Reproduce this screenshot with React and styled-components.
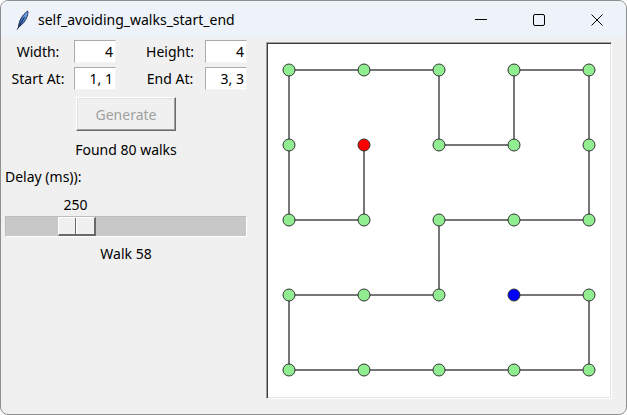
import React from "react";
import styled, { createGlobalStyle } from "styled-components";

const GlobalStyle = createGlobalStyle`
  html, body {
    margin: 0;
    padding: 0;
    background: #ffffff;
  }
  body {
    font-family: "Noto Sans", "Open Sans", sans-serif;
    font-size: 14px;
    color: #000;
  }
`;

const GRID = 5;
const STEP = 75;
const OFF_X = 21;
const OFF_Y = 26;

// walk 58: start (1,1) -> end (3,3)
const walk = [
  [1, 1], [1, 2], [0, 2], [0, 1], [0, 0], [1, 0], [2, 0], [2, 1], [3, 1],
  [3, 0], [4, 0], [4, 1], [4, 2], [3, 2], [2, 2], [2, 3], [1, 3], [0, 3],
  [0, 4], [1, 4], [2, 4], [3, 4], [4, 4], [4, 3], [3, 3],
];

const Window = styled.div`
  width: 627px;
  height: 415px;
  box-sizing: border-box;
  border: 1px solid #8e8e8e;
  border-radius: 8px;
  overflow: hidden;
  background: #f0f0f0;
  display: flex;
  flex-direction: column;
`;

const TitleBar = styled.div`
  height: 37px;
  flex: none;
  display: flex;
  align-items: center;
  background: #eef3f9;
`;

const TitleText = styled.span`
  margin-left: 9px;
  font-size: 14px;
  flex: 1;
  white-space: nowrap;
`;

const CaptionButton = styled.div`
  width: 58px;
  height: 37px;
  display: flex;
  align-items: center;
  justify-content: center;
`;

const Body = styled.div`
  flex: 1;
  display: flex;
  align-items: flex-start;
`;

const Panel = styled.div`
  width: 242px;
  margin-left: 4px;
  display: flex;
  flex-direction: column;
  align-items: center;
`;

const FieldGrid = styled.div`
  align-self: stretch;
  margin-top: 2px;
  display: grid;
  grid-template-columns: 69px 61px 70px 42px;
  row-gap: 4px;
  align-items: center;
`;

const Label = styled.span`
  text-align: center;
  padding-right: ${({ $pad }) => $pad || 0}px;
  white-space: nowrap;
`;

const Entry = styled.div`
  width: 42px;
  height: 23px;
  box-sizing: border-box;
  background: #fff;
  border-top: 1px solid #ababab;
  border-left: 1px solid #ababab;
  border-right: 1px solid #f4f4f4;
  border-bottom: 1px solid #f4f4f4;
  text-align: right;
  padding-right: 2px;
  line-height: 21px;
`;

const Button = styled.div`
  margin-top: 7px;
  width: 100px;
  height: 34px;
  box-sizing: border-box;
  background: #f0f0f0;
  border-top: 1px solid #fff;
  border-left: 1px solid #fff;
  border-right: 1px solid #696969;
  border-bottom: 1px solid #696969;
  box-shadow: inset -1px -1px 0 #a0a0a0, inset 1px 1px 0 #e3e3e3;
  color: ${({ disabled }) => (disabled ? "#a0a0a0" : "#000")};
  display: flex;
  align-items: center;
  justify-content: center;
`;

const Status = styled.div`
  margin-top: ${({ $top }) => $top}px;
  line-height: 20px;
  align-self: ${({ $left }) => ($left ? "flex-start" : "center")};
`;

const Scale = styled.div`
  margin-top: 8px;
  align-self: stretch;
  position: relative;
  padding-top: 21px;
`;

const ScaleValue = styled.span`
  position: absolute;
  top: 0;
  line-height: 20px;
  transform: translateX(-50%);
`;

const Trough = styled.div`
  position: relative;
  height: 21px;
  box-sizing: border-box;
  background: #c8c8c8;
  border-bottom: 1px solid #fff;
  border-right: 1px solid #fff;
  border-top: 1px solid #bdbdbd;
  border-left: 1px solid #bdbdbd;
`;

const Thumb = styled.div`
  position: absolute;
  top: 0;
  width: 38px;
  height: 19px;
  box-sizing: border-box;
  background: #f0f0f0;
  border-top: 1px solid #fff;
  border-left: 1px solid #fff;
  border-right: 2px solid #696969;
  border-bottom: 2px solid #696969;
  display: flex;
  justify-content: center;

  &::after {
    content: "";
    width: 2px;
    height: 100%;
    background: linear-gradient(to right, #696969 50%, #fff 50%);
  }
`;

const Canvas = styled.div`
  margin-left: 19px;
  margin-top: 4px;
  width: 346px;
  height: 357px;
  box-sizing: border-box;
  border-top: 1px solid #a0a0a0;
  border-left: 1px solid #a0a0a0;
  border-right: 1px solid #fff;
  border-bottom: 1px solid #fff;
  box-shadow: inset 1px 1px 0 #3a3a3a, inset -1px -1px 0 #e3e3e3;
  background: #fff;
  padding: 1px;
  display: flex;
`;

function Feather() {
  return (
    <svg width="13" height="20" viewBox="0 0 13 20" style={{ marginLeft: 15 }}>
      <defs>
        <linearGradient id="qf" x1="0" y1="1" x2="1" y2="0">
          <stop offset="0" stopColor="#1d4fa8" />
          <stop offset="1" stopColor="#7fb6f2" />
        </linearGradient>
      </defs>
      <path
        d="M2.5 17.5 C2.8 11, 6 5, 11.8 1 C12.6 5.5, 9.5 12, 3.5 16.5 Z"
        fill="url(#qf)"
        stroke="#17264d"
        strokeWidth="0.9"
      />
      <path d="M1.2 19.5 L8.5 7" stroke="#17264d" strokeWidth="1" />
    </svg>
  );
}

function CaptionIcon({ kind }) {
  return (
    <svg width="12" height="12" viewBox="0 0 12 12">
      {kind === "min" && <line x1="0" y1="5.5" x2="12" y2="5.5" stroke="#000" strokeWidth="1" />}
      {kind === "max" && (
        <rect x="0.5" y="0.5" width="11" height="11" rx="1.5" fill="none" stroke="#000" strokeWidth="1" />
      )}
      {kind === "close" && (
        <path d="M0.5 0.5 L11.5 11.5 M11.5 0.5 L0.5 11.5" stroke="#000" strokeWidth="1" />
      )}
    </svg>
  );
}

function WalkDrawing() {
  const px = (c) => OFF_X + c * STEP;
  const py = (r) => OFF_Y + r * STEP;
  const points = walk.map(([c, r]) => `${px(c)},${py(r)}`).join(" ");
  const nodes = [];
  for (let r = 0; r < GRID; r++) {
    for (let c = 0; c < GRID; c++) {
      let fill = "#90ee90";
      if (c === walk[0][0] && r === walk[0][1]) fill = "#ff0000";
      const last = walk[walk.length - 1];
      if (c === last[0] && r === last[1]) fill = "#0000ff";
      nodes.push(
        <circle key={`${c}-${r}`} cx={px(c)} cy={py(r)} r="6" fill={fill} stroke="#333" strokeWidth="1" />
      );
    }
  }
  return (
    <svg width="342" height="353" viewBox="0 0 342 353">
      <polyline points={points} fill="none" stroke="#4a4a4a" strokeWidth="1.5" />
      {nodes}
    </svg>
  );
}

export default function App() {
  const delay = 250;
  const trackWidth = 242;
  const thumbWidth = 38;
  const thumbLeft = 1 + (delay / 1000) * (trackWidth - 2 - thumbWidth);

  return (
    <>
      <GlobalStyle />
      <Window>
        <TitleBar>
          <Feather />
          <TitleText>self_avoiding_walks_start_end</TitleText>
          <CaptionButton><CaptionIcon kind="min" /></CaptionButton>
          <CaptionButton><CaptionIcon kind="max" /></CaptionButton>
          <CaptionButton><CaptionIcon kind="close" /></CaptionButton>
        </TitleBar>
        <Body>
          <Panel>
            <FieldGrid>
              <Label $pad={3}>Width:</Label>
              <Entry>4</Entry>
              <Label>Height:</Label>
              <Entry>4</Entry>
              <Label $pad={3}>Start At:</Label>
              <Entry>1, 1</Entry>
              <Label>End At:</Label>
              <Entry>3, 3</Entry>
            </FieldGrid>
            <Button disabled>Generate</Button>
            <Status $top={9}>Found 80 walks</Status>
            <Status $top={7} $left>Delay (ms)):</Status>
            <Scale>
              <ScaleValue style={{ left: thumbLeft + thumbWidth / 2 }}>{delay}</ScaleValue>
              <Trough>
                <Thumb style={{ left: thumbLeft }} />
              </Trough>
            </Scale>
            <Status $top={7}>Walk 58</Status>
          </Panel>
          <Canvas>
            <WalkDrawing />
          </Canvas>
        </Body>
      </Window>
    </>
  );
}
